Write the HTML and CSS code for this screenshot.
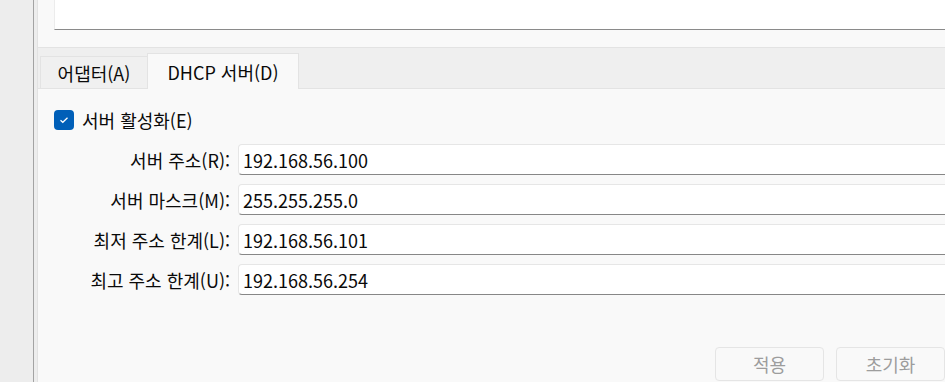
FILE: index.html
```html
<!DOCTYPE html>
<html lang="ko">
<head>
    <meta charset="UTF-8">
    <title>DHCP 서버</title>
    <link rel="stylesheet" href="styles.css">
</head>
<body>
    <div id="sidebar"></div>
    <div id="main">
        <div class="top-panel">
            <div class="list-box"></div>
        </div>
        <div class="tabs">
            <div class="tab">어댑터(A)</div>
            <div class="tab active">DHCP 서버(D)</div>
        </div>
        <div class="tab-content">
            <label class="check-row">
                <span class="checkbox">
                    <svg width="10" height="8" viewBox="0 0 10 8"><polyline points="1.5,4.2 3.8,6.3 8.5,1.7" fill="none" stroke="#fff" stroke-width="1.2"/></svg>
                </span>
                서버 활성화(E)
            </label>
            <div class="form-row">
                <span class="field-label">서버 주소(R):</span>
                <div class="field">192.168.56.100</div>
            </div>
            <div class="form-row">
                <span class="field-label">서버 마스크(M):</span>
                <div class="field">255.255.255.0</div>
            </div>
            <div class="form-row">
                <span class="field-label">최저 주소 한계(L):</span>
                <div class="field">192.168.56.101</div>
            </div>
            <div class="form-row">
                <span class="field-label">최고 주소 한계(U):</span>
                <div class="field">192.168.56.254</div>
            </div>
            <div class="buttons">
                <button disabled>적용</button>
                <button disabled>초기화</button>
            </div>
        </div>
    </div>
</body>
</html>
```

FILE: styles.css
```css
body {
    font-family: "Noto Sans CJK KR", sans-serif;
    font-size: 18px;
    color: #0a0a0a;
    margin: 0;
    padding: 0;
    display: flex;
    height: 382px;
    overflow: hidden;
    background-color: #ededed;
}
#sidebar {
    width: 33px;
    border-right: 1px solid #a3a3a3;
    flex-shrink: 0;
}
#main {
    flex-grow: 1;
    margin-left: 3px;
    border-left: 1px solid #e2e2e2;
    background-color: #f9f9f9;
    display: flex;
    flex-direction: column;
    overflow: hidden;
}
.top-panel {
    height: 48px;
    padding-left: 16px;
    border-bottom: 1px solid #e3e3e3;
    box-sizing: border-box;
}
.list-box {
    height: 29px;
    background-color: #fff;
    border-left: 1px solid #ececec;
    border-bottom: 1px solid #8a8a8a;
}
.tabs {
    height: 41px;
    box-sizing: border-box;
    background-color: #efefef;
    border-bottom: 1px solid #e3e3e3;
    padding-left: 2px;
    display: flex;
    align-items: flex-end;
}
.tab {
    height: 32px;
    width: 108px;
    box-sizing: border-box;
    border: 1px solid #e3e3e3;
    border-bottom: none;
    display: flex;
    align-items: center;
    justify-content: center;
    background-color: #f0f0f0;
}
.tab.active {
    width: 152px;
    height: 36px;
    margin-bottom: -1px;
    margin-left: -1px;
    background-color: #f9f9f9;
}
.tab-content {
    padding: 21px 0 0 16px;
    display: flex;
    flex-direction: column;
}
.check-row {
    display: flex;
    align-items: center;
    gap: 8px;
    height: 20px;
    margin-bottom: 14px;
}
.checkbox {
    width: 20px;
    height: 20px;
    border-radius: 4px;
    background-color: #005fb8;
    display: flex;
    align-items: center;
    justify-content: center;
}
.form-row {
    display: flex;
    align-items: center;
    gap: 8px;
    margin-bottom: 9px;
}
.field-label {
    width: 176px;
    flex-shrink: 0;
    text-align: right;
    white-space: nowrap;
}
.field {
    width: 760px;
    height: 31px;
    box-sizing: border-box;
    flex-shrink: 0;
    background-color: #fff;
    border: 1px solid #e6e6e6;
    border-bottom: 1px solid #878787;
    border-radius: 4px;
    padding-left: 4px;
    display: flex;
    align-items: center;
}
.buttons {
    display: flex;
    justify-content: flex-end;
    gap: 12px;
    margin-top: 43px;
}
button {
    width: 109px;
    height: 34px;
    font-family: inherit;
    font-size: 18px;
    color: #9d9d9d;
    background-color: #f9f9f9;
    border: 1px solid #e5e5e5;
    border-radius: 4px;
}
```
